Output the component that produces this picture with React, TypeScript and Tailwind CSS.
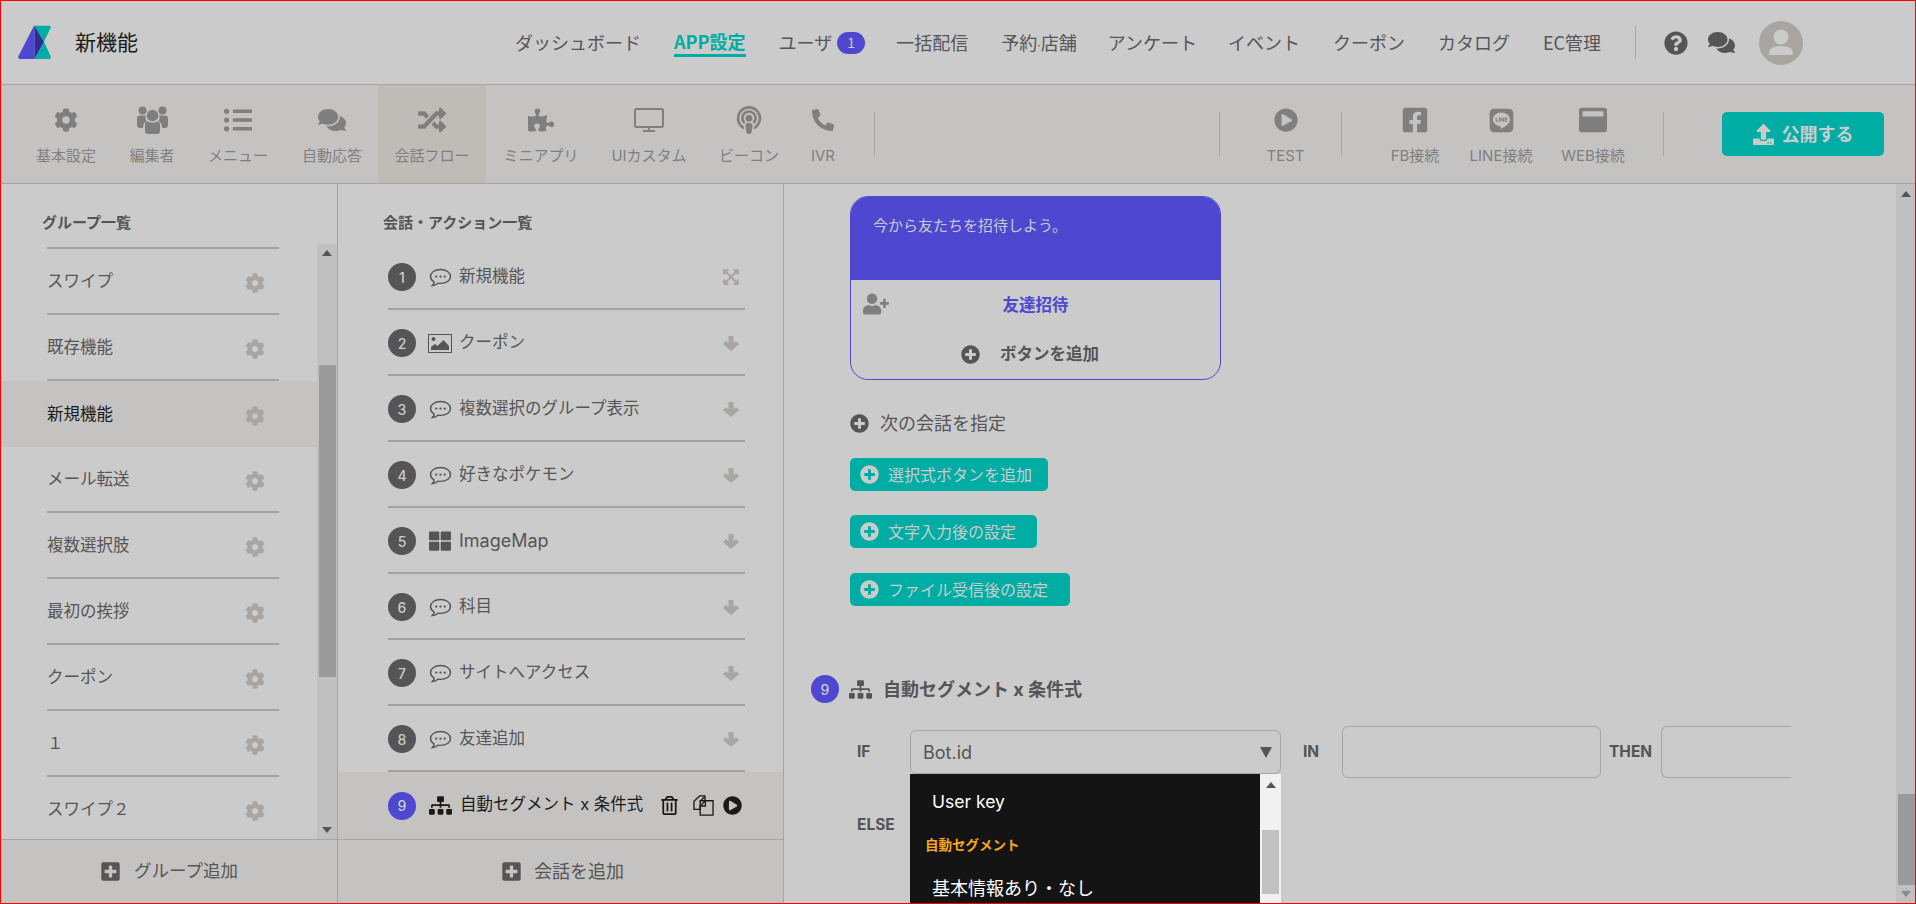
import type { ReactNode } from "react";
import {
  FaCog,
  FaComments,
  FaExpandArrowsAlt,
  FaFacebookSquare,
  FaLine,
  FaListUl,
  FaPhoneAlt,
  FaPlayCircle,
  FaPlusCircle,
  FaPlusSquare,
  FaPodcast,
  FaPuzzlePiece,
  FaQuestionCircle,
  FaRandom,
  FaRegTrashAlt,
  FaSitemap,
  FaThLarge,
  FaUpload,
  FaUserPlus,
  FaWindowMaximize,
} from "react-icons/fa";

const navItems = [
  { label: "ダッシュボード", className: "" },
  { label: "APP設定", className: "" },
  { label: "ユーザ", className: "-mr-[2px]" },
  { label: "一括配信", className: "" },
  { label: "予約·店舗", className: "-mr-[2px]" },
  { label: "アンケート", className: "-mr-[2px]" },
  { label: "イベント", className: "" },
  { label: "クーポン", className: "" },
  { label: "カタログ", className: "" },
  { label: "EC管理", className: "" },
];

const groups = ["スワイプ", "既存機能", "新規機能", "メール転送", "複数選択肢", "最初の挨拶", "クーポン", "\uFF11", "スワイプ\uFF12"];

const Logo = () => (
  <svg viewBox="0 0 60 45" className="w-[60px] h-[45px] shrink-0">
    <path d="M25 5.7 L9.5 36 Q8.5 39 11 39 L25.7 39 L25.7 5.7 Z" fill="#4d48cf" />
    <path d="M25.7 5.7 L35 21.7 L25.7 39 Z" fill="#2f2c96" />
    <path d="M25.4 5.7 L40 5.7 Q42.5 5.7 41.5 8 L35 21.7 Z" fill="#00ada4" />
    <path d="M35 21.7 L41.5 36 Q42.5 39 40 39 L25.7 39 Z" fill="#00ada4" />
  </svg>
);

const Chat = () => (
  <svg viewBox="0 0 24 20" className="w-[23px] h-[19px]" fill="none" stroke="#555555" strokeWidth="1.5">
    <path d="M12 1.5C6 1.5 1.5 4.8 1.5 9c0 2.4 1.5 4.4 3.8 5.8-.2 1.4-.9 2.7-1.9 3.7 2.4-.3 4.5-1.3 6-2.5.8.1 1.7.2 2.6.2 6 0 10.5-3 10.5-7.2S18 1.5 12 1.5z" />
    <circle cx="7.5" cy="9" r="1.2" fill="#555555" stroke="none" />
    <circle cx="12" cy="9" r="1.2" fill="#555555" stroke="none" />
    <circle cx="16.5" cy="9" r="1.2" fill="#555555" stroke="none" />
  </svg>
);

const Picture = () => (
  <svg viewBox="0 0 24 19" className="w-[24px] h-[19px]">
    <rect x="0.5" y="0.5" width="23" height="18" fill="none" stroke="#555555" />
    <circle cx="5.5" cy="5" r="2" fill="#555555" />
    <path d="M3 16 L3 13 L7 10 L9.5 12 L15.5 6 L21 12 L21 16 Z" fill="#555555" />
  </svg>
);

const CopyDocs = () => (
  <svg viewBox="0 0 22 22" className="w-[23px] h-[21px]" fill="none" stroke="#1a1a1a" strokeWidth="1.4">
    <path d="M7 1 L12.5 1 L12.5 6 L7.5 6 L7.5 15 L1 15 L1 6.5 Z" />
    <path d="M7.5 6.5 L12.5 1.5" />
    <path d="M13 6 L21 6 L21 21 L7.5 21 L7.5 11.5 Z" />
    <path d="M13 6 L13 11.5 L7.5 11.5" />
  </svg>
);

const Avatar = () => (
  <svg viewBox="0 0 44 44" className="w-[44px] h-[44px]">
    <circle cx="22" cy="22" r="22" fill="#a9a5a0" />
    <circle cx="22" cy="16" r="7.5" fill="#cbcbcb" />
    <path d="M10 33 C10 27 15 25 22 25 C29 25 34 27 34 33 L34 34 L10 34 Z" fill="#cbcbcb" />
  </svg>
);

const People = () => (
  <svg viewBox="0 0 31 28" className="w-[31px] h-[28px]" fill="currentColor">
    <circle cx="5.5" cy="4.5" r="4" />
    <circle cx="25.5" cy="4.5" r="4" />
    <circle cx="15.5" cy="9.5" r="5.8" />
    <path d="M0 19 L0 12 Q0 9.5 3 9.5 L8.5 9.5 Q8 13 9.5 15 Q6 17 6 22 L3 22 Q0 21.5 0 19 Z" />
    <path d="M31 19 L31 12 Q31 9.5 28 9.5 L22.5 9.5 Q23 13 21.5 15 Q25 17 25 22 L28 22 Q31 21.5 31 19 Z" />
    <path d="M8 18 Q8 15 11 15.5 Q15.5 18 20 15.5 Q23 15 23 18 L23 25 Q23 28 20 28 L11 28 Q8 28 8 25 Z" />
  </svg>
);

const Screen = () => (
  <svg viewBox="0 0 30 24" className="w-[30px] h-[24px]" fill="none" stroke="currentColor" strokeWidth="2">
    <rect x="1" y="1" width="28" height="18" rx="1.5" />
    <path d="M15 19 L15 23 M9 23 L21 23" />
  </svg>
);

const ArrowDown = () => (
  <svg viewBox="0 0 16 15" className="w-[16px] h-[15px]" fill="currentColor">
    <path d="M5.5 0 H10.5 V7.5 L13 5 L16 8 L8 15 L0 8 L3 5 L5.5 7.5 Z" />
  </svg>
);

const Triangle = ({ up, color }: { up?: boolean; color: string }) => (
  <svg viewBox="0 0 10 6" className="w-[10px] h-[6px]">
    <path d={up ? "M5 0 L10 6 L0 6 Z" : "M0 0 L10 0 L5 6 Z"} fill={color} />
  </svg>
);

const Sep = ({ className = "" }: { className?: string }) => (
  <div className={`w-px h-[44px] bg-[#a9a5a0] shrink-0 ${className}`} />
);

const ToolItem = ({ icon, label, className = "" }: { icon: ReactNode; label: string; className?: string }) => (
  <div className={`h-full flex flex-col items-center shrink-0 text-[#7f7f7f] ${className}`}>
    <div className="h-[24px] mt-[23px] flex items-center justify-center">{icon}</div>
    <span className="mt-[14px] text-[15px] leading-[20px] whitespace-nowrap">{label}</span>
  </div>
);

const Num = ({ n, active }: { n: number; active?: boolean }) => (
  <span className={`w-[28px] h-[28px] rounded-full shrink-0 flex items-center justify-center text-[14px] font-medium text-[#cbcbcb] ${active ? "bg-[#4d48cf]" : "bg-[#555555]"}`}>
    {n}
  </span>
);

const GreenButton = ({ label, className = "" }: { label: string; className?: string }) => (
  <div className={`h-[33px] rounded-[5px] bg-[#00ada4] flex items-center pl-[10px] gap-[9px] text-[16px] text-[#cbcbcb] ${className}`}>
    <FaPlusCircle size={19} className="shrink-0" />
    <span className="whitespace-nowrap">{label}</span>
  </div>
);

const ConversationRow = ({ n, icon, label }: { n: number; icon: ReactNode; label: string }) => (
  <div className="h-[66px] shrink-0">
    <div className="h-[64px] pt-[2px] pl-[50px] pr-[44px] flex items-center">
      <Num n={n} />
      <span className="w-[24px] ml-[12px] flex justify-center">{icon}</span>
      <span className={`ml-[7px] -mt-[2px] text-[#555555] whitespace-nowrap ${n === 5 ? "text-[18px]" : "text-[16.5px]"}`}>{label}</span>
      <span className="ml-auto w-[16px] flex justify-center text-[#a9a5a0]">
        {n === 1 ? <FaExpandArrowsAlt size={18} /> : <ArrowDown />}
      </span>
    </div>
    <div className="h-[2px] w-[357px] ml-[50px] bg-[#a3a3a3]" />
  </div>
);

export default function App() {
  return (
    <div className="h-[904px] w-full overflow-hidden flex flex-col border border-[#ff0000] bg-[#cbcbcb] font-['Inter','Noto_Sans_CJK_JP',sans-serif] text-[#555555]">
      {/* top bar */}
      <header className="h-[84px] shrink-0 border-b border-[#a9a5a0] flex items-center pl-[8px]">
        <Logo />
        <span className="ml-[6px] text-[21px] text-[#1a1a1a] whitespace-nowrap">新機能</span>
        <nav className="ml-[377px] flex items-center gap-[33px] text-[18px] font-['Noto_Sans_CJK_JP',sans-serif]">
          {navItems.map((item) => (
            <div key={item.label} className={`flex items-center whitespace-nowrap ${item.className}`}>
              {item.label === "APP設定" ? (
                <span className="font-bold text-[#00ada4] border-b-[3px] border-[#00ada4] leading-[25px] mt-[1px]">{item.label}</span>
              ) : item.label === "予約·店舗" ? (
                <span>
                  予約<span className="font-['Inter'] text-[12px]">·</span>店舗
                </span>
              ) : (
                <span>{item.label}</span>
              )}
              {item.label === "ユーザ" && (
                <span className="ml-[5px] w-[28px] h-[22px] rounded-full bg-[#4d48cf] text-[#cbcbcb] text-[14px] flex items-center justify-center">1</span>
              )}
            </div>
          ))}
        </nav>
        <Sep className="ml-[34px] !h-[33px]" />
        <FaQuestionCircle size={24} className="ml-[28px] text-[#555555]" />
        <FaComments size={27} className="ml-[20px] text-[#555555]" />
        <div className="ml-[24px]">
          <Avatar />
        </div>
      </header>

      {/* toolbar */}
      <div className="h-[99px] shrink-0 border-b border-[#a9a5a0] bg-[#c5c3c1] flex items-center pl-[21px]">
        <ToolItem className="w-[88px]" icon={<FaCog size={24} />} label="基本設定" />
        <ToolItem className="w-[84px]" icon={<People />} label="編集者" />
        <ToolItem className="w-[88px]" icon={<FaListUl size={28} />} label="メニュー" />
        <ToolItem className="w-[92px] ml-[4px]" icon={<FaComments size={28} />} label="自動応答" />
        <ToolItem className="w-[108px] bg-[#bfbcb8]" icon={<FaRandom size={28} />} label="会話フロー" />
        <ToolItem className="w-[110px]" icon={<FaPuzzlePiece size={26} />} label="ミニアプリ" />
        <ToolItem className="w-[106px]" icon={<Screen />} label="UIカスタム" />
        <ToolItem className="w-[94px]" icon={<FaPodcast size={28} />} label="ビーコン" />
        <ToolItem className="w-[54px]" icon={<FaPhoneAlt size={22} />} label="IVR" />
        <Sep className="ml-[24px]" />
        <Sep className="ml-auto" />
        <ToolItem className="w-[121px] pl-[10px]" icon={<FaPlayCircle size={24} />} label="TEST" />
        <Sep />
        <ToolItem className="w-[86px] ml-[30px]" icon={<FaFacebookSquare size={28} />} label="FB接続" />
        <ToolItem className="w-[86px]" icon={<FaLine size={27} />} label="LINE接続" />
        <ToolItem className="w-[98px]" icon={<FaWindowMaximize size={28} />} label="WEB接続" />
        <Sep className="ml-[21px]" />
        <div className="ml-[58px] mr-[31px] w-[162px] h-[44px] rounded-[5px] bg-[#00ada4] flex items-center justify-center gap-[8px] text-[#cbcbcb] shrink-0">
          <FaUpload size={21} />
          <span className="text-[18px] font-bold">公開する</span>
        </div>
      </div>

      <div className="flex-1 min-h-0 flex">
        {/* group list */}
        <aside className="w-[337px] shrink-0 border-r border-[#a9a5a0] flex flex-col">
          <div className="h-[60px] shrink-0 pt-[28px] pl-[41px] text-[15px] leading-[22px] font-bold">グループ一覧</div>
          <div className="flex-1 min-h-0 flex">
            <div className="w-[316px] pt-[3px] overflow-hidden">
              {groups.map((g) => {
                const active = g === "新規機能";
                return (
                  <div key={g} className="h-[66px]">
                    <div className={`h-[2px] w-[232px] ml-[46px] ${g === "メール転送" ? "" : "bg-[#a3a3a3]"}`} />
                    <div className={`flex items-center pl-[46px] pr-[52px] text-[16.5px] ${active ? "relative h-[66px] bg-[#c5c3c1] text-[#1a1a1a]" : "h-[64px]"}`}>
                      <span className="whitespace-nowrap">{g}</span>
                      <FaCog size={20} className="ml-auto mt-[3px] text-[#a9a5a0]" />
                    </div>
                  </div>
                );
              })}
            </div>
            <div className="w-[20px] bg-[#c0c0c0] flex flex-col items-center">
              <div className="h-[16px] mt-[6px]">
                <Triangle up color="#555555" />
              </div>
              <div className="w-[17px] h-[312px] mt-[99px] bg-[#9b9b9b]" />
              <div className="mt-auto mb-[6px]">
                <Triangle color="#555555" />
              </div>
            </div>
          </div>
          <div className="h-[64px] shrink-0 border-t border-[#a9a5a0] bg-[#c5c3c1] flex items-center justify-center gap-[13px] text-[17.5px]">
            <FaPlusSquare size={21} />
            <span>グループ追加</span>
          </div>
        </aside>

        {/* conversation list */}
        <section className="w-[446px] shrink-0 border-r border-[#a9a5a0] flex flex-col">
          <div className="h-[60px] shrink-0 pt-[28px] pl-[45px] text-[15px] leading-[22px] font-bold">会話・アクション一覧</div>
          <div className="flex-1 min-h-0 flex flex-col overflow-hidden">
            <ConversationRow n={1} icon={<Chat />} label="新規機能" />
            <ConversationRow n={2} icon={<Picture />} label="クーポン" />
            <ConversationRow n={3} icon={<Chat />} label="複数選択のグループ表示" />
            <ConversationRow n={4} icon={<Chat />} label="好きなポケモン" />
            <ConversationRow n={5} icon={<FaThLarge size={22} />} label="ImageMap" />
            <ConversationRow n={6} icon={<Chat />} label="科目" />
            <ConversationRow n={7} icon={<Chat />} label="サイトへアクセス" />
            <ConversationRow n={8} icon={<Chat />} label="友達追加" />
            <div className="h-[67px] shrink-0 bg-[#c5c3c1] flex items-center pl-[50px] text-[#1a1a1a]">
              <Num n={9} active />
              <span className="w-[24px] ml-[12px] flex justify-center">
                <FaSitemap size={23} />
              </span>
              <span className="ml-[8px] -mt-[2px] text-[16.5px] whitespace-nowrap">自動セグメント x 条件式</span>
              <FaRegTrashAlt size={19} className="ml-[17px]" />
              <span className="ml-[13px]">
                <CopyDocs />
              </span>
              <FaPlayCircle size={19} className="ml-[8px]" />
            </div>
          </div>
          <div className="h-[64px] shrink-0 border-t border-[#a9a5a0] bg-[#c5c3c1] flex items-center justify-center gap-[12px] pl-[4px] text-[18px]">
            <FaPlusSquare size={21} />
            <span>会話を追加</span>
          </div>
        </section>

        {/* editor */}
        <main className="flex-1 min-w-0 flex overflow-hidden">
          <div className="flex-1 min-w-0 pt-[12px] pl-[27px] overflow-hidden">
            <div className="ml-[39px]">
              <div className="w-[371px] h-[184px] rounded-[18px] border border-[#4d48cf] overflow-hidden">
                <div className="h-[83px] bg-[#4d48cf] pl-[22px] pt-[18px] text-[15px] leading-[22px] text-[#cbcbcb]">今から友たちを招待しよう。</div>
                <div className="relative h-[50px] flex items-center justify-center font-bold text-[16.5px] text-[#4d48cf]">
                  <FaUserPlus size={26} className="absolute left-[12px] top-[11px] text-[#7f7f7f]" />
                  友達招待
                </div>
                <div className="flex items-center pl-[110px] gap-[20px] h-[48px] font-bold text-[16.5px]">
                  <FaPlusCircle size={19} />
                  <span>ボタンを追加</span>
                </div>
              </div>

              <div className="mt-[31px] h-[24px] flex items-center gap-[11px] text-[18px]">
                <FaPlusCircle size={19} />
                <span>次の会話を指定</span>
              </div>

              <GreenButton label="選択式ボタンを追加" className="mt-[23px] w-[198px]" />
              <GreenButton label="文字入力後の設定" className="mt-[24px] w-[187px]" />
              <GreenButton label="ファイル受信後の設定" className="mt-[25px] w-[220px]" />
            </div>

            <div className="mt-[69px] flex items-center text-[18px] font-bold">
              <Num n={9} active />
              <FaSitemap size={23} className="ml-[10px]" />
              <span className="ml-[11px] whitespace-nowrap">自動セグメント x 条件式</span>
            </div>

            <div className="mt-[23px] h-[52px] w-[980px] flex items-center pl-[46px] font-bold text-[15.5px]">
              <span className="w-[53px]">IF</span>
              <div className="relative w-[371px] h-[44px] rounded-[6px] border border-[#a9a5a0] flex items-center pl-[12px] pr-[8px] shrink-0 font-normal text-[18px]">
                <span>Bot.id</span>
                <span className="ml-auto">
                  <svg viewBox="0 0 12 11" className="w-[12px] h-[11px]">
                    <path d="M0 0 L12 0 L6 11 Z" fill="#555555" />
                  </svg>
                </span>
                <div className="absolute z-10 -left-px top-[43px] w-[371px] h-[131px] bg-[#141414] flex overflow-hidden">
                  <div className="flex-1 min-w-0">
                    <div className="mt-[16px] ml-[22px] text-[17.5px] leading-[24px] text-white">User key</div>
                    <div className="mt-[21px] ml-[15px] text-[13.5px] leading-[20px] font-bold text-[#f5a623]">自動セグメント</div>
                    <div className="mt-[21px] ml-[22px] text-[18px] leading-[26px] text-white">基本情報あり・なし</div>
                  </div>
                  <div className="w-[21px] bg-[#f1f1f1] flex flex-col items-center">
                    <div className="h-[6px] mt-[8px]">
                      <Triangle up color="#555555" />
                    </div>
                    <div className="w-[17px] h-[64px] mt-[42px] bg-[#c1c1c1]" />
                  </div>
                </div>
              </div>
              <span className="ml-[22px] w-[39px] shrink-0">IN</span>
              <div className="w-[259px] h-[52px] rounded-[6px] border border-[#a9a5a0] shrink-0" />
              <span className="ml-[8px] w-[52px] shrink-0">THEN</span>
              <div className="w-[130px] h-[52px] rounded-l-[6px] border-y border-l border-[#a9a5a0] shrink-0" />
            </div>

            <div className="mt-[21px] h-[51px] flex items-center pl-[46px] font-bold text-[15.5px]">
              <span className="w-[53px]">ELSE</span>
              <div className="w-[258px] h-[51px] rounded-[6px] border border-[#a9a5a0]" />
            </div>
          </div>

          {/* page scrollbar */}
          <div className="w-[19px] shrink-0 bg-[#c0c0c0] flex flex-col items-center">
            <div className="h-[6px] mt-[7px]">
              <Triangle up color="#555555" />
            </div>
            <div className="w-[17px] h-[91px] mt-[597px] ml-[1px] bg-[#9b9b9b]" />
            <div className="mt-auto mb-[6px]">
              <Triangle color="#8a8a8a" />
            </div>
          </div>
        </main>
      </div>
    </div>
  );
}
